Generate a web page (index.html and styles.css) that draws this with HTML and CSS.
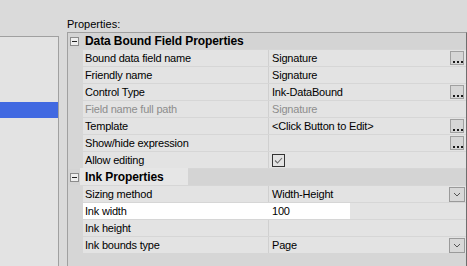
FILE: index.html
```html
<!DOCTYPE html>
<html lang="en">
<head>
    <meta charset="UTF-8">
    <title>Properties</title>
    <link rel="stylesheet" href="styles.css">
</head>
<body>
    <div class="window">
        <!-- field list on the left, mostly cut off -->
        <div class="list-panel">
            <div class="list-sel"></div>
        </div>

        <div class="props">
            <div class="props-label">Properties:</div>
            <div class="grid">
                <div class="row cat">
                    <span class="gutter"><span class="minus"></span></span>
                    <span class="cat-name">Data Bound Field Properties</span>
                </div>
                <div class="row">
                    <span class="gutter"></span>
                    <span class="name">Bound data field name</span>
                    <span class="value">Signature<span class="dots-btn"><svg width="12" height="12"><rect x="2" y="9" width="2" height="2"/><rect x="6" y="9" width="2" height="2"/><rect x="10" y="9" width="2" height="2"/></svg></span></span>
                </div>
                <div class="row">
                    <span class="gutter"></span>
                    <span class="name">Friendly name</span>
                    <span class="value">Signature</span>
                </div>
                <div class="row">
                    <span class="gutter"></span>
                    <span class="name">Control Type</span>
                    <span class="value">Ink-DataBound<span class="dots-btn"><svg width="12" height="12"><rect x="2" y="9" width="2" height="2"/><rect x="6" y="9" width="2" height="2"/><rect x="10" y="9" width="2" height="2"/></svg></span></span>
                </div>
                <div class="row disabled">
                    <span class="gutter"></span>
                    <span class="name">Field name full path</span>
                    <span class="value">Signature</span>
                </div>
                <div class="row">
                    <span class="gutter"></span>
                    <span class="name">Template</span>
                    <span class="value">&lt;Click Button to Edit&gt;<span class="dots-btn"><svg width="12" height="12"><rect x="2" y="9" width="2" height="2"/><rect x="6" y="9" width="2" height="2"/><rect x="10" y="9" width="2" height="2"/></svg></span></span>
                </div>
                <div class="row">
                    <span class="gutter"></span>
                    <span class="name">Show/hide expression</span>
                    <span class="value"><span class="dots-btn"><svg width="12" height="12"><rect x="2" y="9" width="2" height="2"/><rect x="6" y="9" width="2" height="2"/><rect x="10" y="9" width="2" height="2"/></svg></span></span>
                </div>
                <div class="row">
                    <span class="gutter"></span>
                    <span class="name">Allow editing</span>
                    <span class="value"><span class="check"><svg width="11" height="11"><polyline points="2,5.5 4.5,8 9,3" fill="none" stroke="#6b6b6b" stroke-width="1.1"/></svg></span></span>
                </div>
                <div class="row cat">
                    <span class="gutter"><span class="minus"></span></span>
                    <span class="cat-name"><span class="cat-focus">Ink Properties</span></span>
                </div>
                <div class="row">
                    <span class="gutter"></span>
                    <span class="name">Sizing method</span>
                    <span class="value">Width-Height<span class="drop-btn"><svg width="14" height="13"><polyline points="4,5 7,8 10,5" fill="none" stroke="#555" stroke-width="1"/></svg></span></span>
                </div>
                <div class="row editing">
                    <span class="gutter"></span>
                    <span class="name">Ink width</span>
                    <span class="value">100</span>
                </div>
                <div class="row">
                    <span class="gutter"></span>
                    <span class="name">Ink height</span>
                    <span class="value"></span>
                </div>
                <div class="row">
                    <span class="gutter"></span>
                    <span class="name">Ink bounds type</span>
                    <span class="value">Page<span class="drop-btn"><svg width="14" height="13"><polyline points="4,5 7,8 10,5" fill="none" stroke="#555" stroke-width="1"/></svg></span></span>
                </div>
            </div>
        </div>
    </div>
</body>
</html>
```

FILE: styles.css
```css
body {
    margin: 0;
    background-color: #dadada;
    font-family: "Liberation Sans", Arial, sans-serif;
    font-size: 11px;
    color: #000;
    overflow: hidden;
}

.window {
    display: flex;
    height: 266px;
}

.list-panel {
    width: 58px;
    margin-top: 36px;
    background-color: #e3e3e3;
    border-top: 1px solid #a0a0a0;
    border-right: 1px solid #a0a0a0;
}

.list-sel {
    height: 16px;
    margin-top: 65px;
    background-color: #4169e1;
}

.props {
    flex: 1;
    display: flex;
    flex-direction: column;
    padding: 17px 0 0 8px;
}

.props-label {
    height: 15px;
    line-height: 15px;
}

.grid {
    flex: 1;
    background-color: #d6d6d6;
    border-top: 1px solid #a0a0a0;
    border-left: 1px solid #a0a0a0;
    border-right: 1px solid #6e6e6e;
}

.row {
    display: flex;
    height: 16px;
    line-height: 16px;
    letter-spacing: -0.2px;
}

.row + .row {
    margin-top: 1px;
}

.gutter {
    width: 15px;
    flex: none;
    position: relative;
}

.name {
    width: 183px;
    flex: none;
    padding-left: 2px;
    background-color: #e3e3e3;
    border-right: 1px solid #d0d0d0;
    white-space: nowrap;
}

.value {
    flex: 1;
    display: flex;
    align-items: center;
    padding-left: 3px;
    background-color: #e3e3e3;
    white-space: nowrap;
}

.disabled .name,
.disabled .value {
    color: #8d8d8d;
}

.cat {
    background-color: #d4d4d4;
}

.cat-name {
    font-weight: bold;
    font-size: 12px;
    letter-spacing: -0.1px;
    padding-left: 2px;
}

.cat-focus {
    display: inline-block;
    margin-left: -5px;
    padding: 0 10px 0 5px;
    width: 93px;
    background-color: #e6e6e6;
    height: 17px;
    margin-top: -1px;
    line-height: 18px;
}

.minus {
    position: absolute;
    left: 2px;
    top: 4px;
    width: 7px;
    height: 7px;
    border: 1px solid #8c8c8c;
    background-color: #eeeeee;
}

.minus::after {
    content: "";
    position: absolute;
    left: 1px;
    top: 3px;
    width: 5px;
    height: 1px;
    background-color: #222;
}

.dots-btn {
    margin-left: auto;
    margin-right: 2px;
    width: 12px;
    height: 12px;
    border: 1px solid #a0a0a0;
    background-color: #d6d6d6;
    display: flex;
}

.dots-btn svg {
    fill: #1a1a1a;
}

.drop-btn {
    margin-left: auto;
    margin-right: 1px;
    width: 14px;
    height: 13px;
    border: 1px solid #9a9a9a;
    background-color: #d8d8d8;
    display: flex;
}

.check {
    width: 11px;
    height: 11px;
    border: 1px solid #333;
    display: flex;
    margin-top: 1px;
}

.editing .name {
    background-color: #fff;
    border-right-color: #fff;
}

.editing .value {
    background: linear-gradient(to right, #fff 81px, #e3e3e3 81px);
}
```
